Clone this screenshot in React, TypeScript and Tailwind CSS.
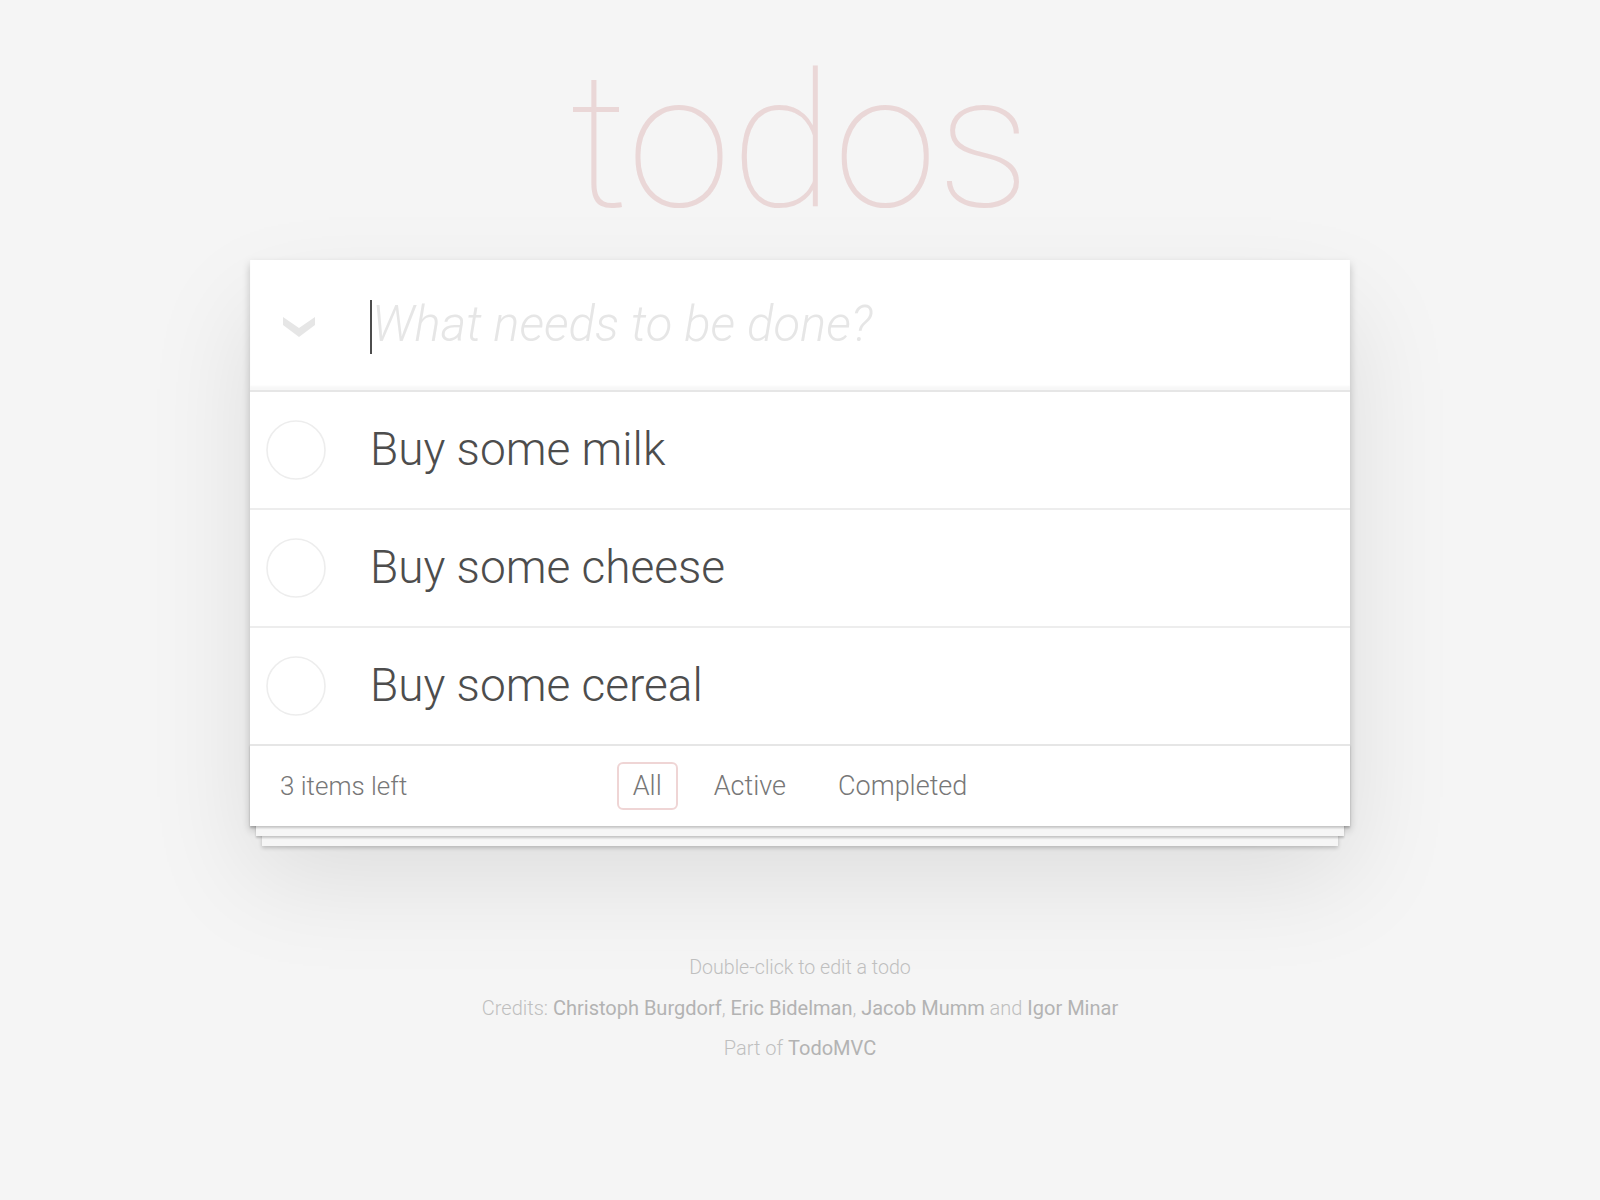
import React from 'react';

const todos = ['Buy some milk', 'Buy some cheese', 'Buy some cereal'];

function Chevron() {
  return (
    <svg width="32" height="20" viewBox="0 0 32 20" className="block">
      <polygon points="0,0 16,11 32,0 32,8 16,20 0,8" fill="#e6e6e6" />
    </svg>
  );
}

function Circle() {
  return (
    <svg width="60" height="60" viewBox="0 0 60 60" className="block">
      <circle cx="30" cy="30" r="29" fill="none" stroke="#ededed" strokeWidth="1.6" />
    </svg>
  );
}

export default function App() {
  return (
    <div className="min-h-screen bg-[#f5f5f5] font-['Roboto','Helvetica_Neue',Arial,sans-serif] font-light text-[#4d4d4d]">
      <div className="w-[1100px] mx-auto pt-[48px]">
        {/* Title */}
        <h1 className="text-center text-[188px] leading-none font-thin text-[rgba(175,47,47,0.15)] h-[188px]">
          todos
        </h1>

        {/* App card */}
        <section className="mt-[24px] bg-white shadow-[0_4px_8px_rgba(0,0,0,0.2),0_50px_100px_rgba(0,0,0,0.1)]">
          <header className="flex items-center h-[130px] shadow-[inset_0_-4px_2px_rgba(0,0,0,0.03)]">
            <div className="w-[120px] pl-[33px] mt-1">
              <Chevron />
            </div>
            <span className="w-[2px] h-[54px] bg-[#4d4d4d] mt-1" />
            <input
              className="flex-1 bg-transparent outline-none text-[49px] leading-[1.4] italic font-light placeholder:text-[#e6e6e6] placeholder:italic"
              placeholder="What needs to be done?"
            />
          </header>

          <ul className="border-t-2 border-[#e6e6e6]">
            {todos.map((t, i) => (
              <li
                key={t}
                className={`box-content flex items-center h-[116px] ${i < todos.length - 1 ? 'border-b-2 border-[#ededed]' : ''}`}
              >
                <div className="w-[120px] pl-[16px]">
                  <Circle />
                </div>
                <label className="text-[46px] leading-[1.2] text-[#4d4d4d]">{t}</label>
              </li>
            ))}
          </ul>

          <footer className="grid grid-cols-[1fr_auto_1fr] items-center h-[82px] px-[30px] border-t-2 border-[#e6e6e6] text-[27px] text-[#777] shadow-[0_2px_2px_rgba(0,0,0,0.2),0_16px_0_-6px_#f6f6f6,0_18px_2px_-6px_rgba(0,0,0,0.2),0_32px_0_-12px_#f6f6f6,0_34px_4px_-12px_rgba(0,0,0,0.2)]">
            <span className="text-[26px]">3 items left</span>
            <ul className="flex gap-[20px]">
              <li>
                <a className="block px-[14px] py-[6px] leading-[32px] border-2 rounded-[6px] border-[rgba(175,47,47,0.2)]">All</a>
              </li>
              <li>
                <a className="block px-[14px] py-[6px] leading-[32px] border-2 rounded-[6px] border-transparent">Active</a>
              </li>
              <li>
                <a className="block px-[14px] py-[6px] leading-[32px] border-2 rounded-[6px] border-transparent">Completed</a>
              </li>
            </ul>
            <span />
          </footer>
        </section>

        {/* Info */}
        <div className="mt-[122px] text-center text-[20px] leading-[40px] text-[#bfbfbf]">
          <p className="text-[19.6px]">Double-click to edit a todo</p>
          <p>
            Credits: <a className="font-normal text-[#b3b3b3]">Christoph Burgdorf</a>,{' '}
            <a className="font-normal text-[#b3b3b3]">Eric Bidelman</a>,{' '}
            <a className="font-normal text-[#b3b3b3]">Jacob Mumm</a> and{' '}
            <a className="font-normal text-[#b3b3b3]">Igor Minar</a>
          </p>
          <p>
            Part of <a className="font-normal text-[#b3b3b3]">TodoMVC</a>
          </p>
        </div>
      </div>
    </div>
  );
}
